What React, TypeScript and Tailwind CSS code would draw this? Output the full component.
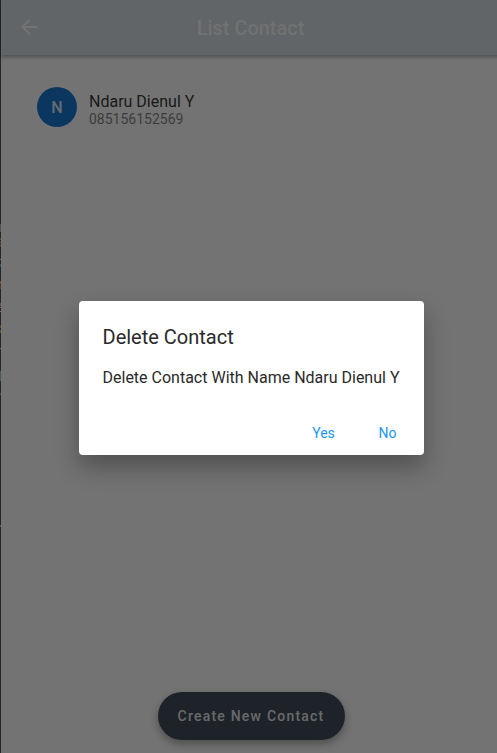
const edgeMarks = [
  { top: 224, height: 8, color: "#4b5250" },
  { top: 238, height: 2, color: "#5c4632" },
  { top: 241, height: 3, color: "#5a3a2c" },
  { top: 245, height: 1, color: "#666666" },
  { top: 259, height: 1, color: "#707070" },
  { top: 264, height: 3, color: "#26506e" },
  { top: 281, height: 3, color: "#6b5333" },
  { top: 285, height: 4, color: "#5a3a2c" },
  { top: 303, height: 3, color: "#6b5333" },
  { top: 307, height: 1, color: "#666666" },
  { top: 311, height: 1, color: "#707070" },
  { top: 325, height: 3, color: "#5a4630" },
  { top: 330, height: 3, color: "#6b4526" },
  { top: 348, height: 1, color: "#707070" },
  { top: 371, height: 10, color: "#4a5a56" },
  { top: 393, height: 2, color: "#5a4638" },
  { top: 525, height: 2, color: "#55555c" },
];

function WindowEdge() {
  return (
    <div className="relative w-px shrink-0 bg-[#272727]">
      {edgeMarks.map((m) => (
        <span
          key={m.top}
          className="absolute left-0 w-px"
          style={{ top: m.top, height: m.height, backgroundColor: m.color }}
        />
      ))}
    </div>
  );
}

function AppBar() {
  return (
    <header className="z-10 grid h-[55px] shrink-0 grid-cols-[56px_1fr_56px] items-center bg-[#d3dce1] text-[#fafafa] shadow-[0_2px_4px_rgba(0,0,0,0.3)]">
      <button aria-label="Back" className="flex justify-center pb-px">
        <svg className="size-6" viewBox="0 0 24 24" fill="currentColor">
          <path d="M20 11H7.83l5.59-5.59L12 4l-8 8 8 8 1.41-1.41L7.83 13H20v-2z" />
        </svg>
      </button>
      <h1 className="pr-px text-center text-[20px] leading-6 font-medium tracking-[-0.03px] text-[#fafafa]/90">
        List Contact
      </h1>
    </header>
  );
}

function ContactRow() {
  return (
    <div className="flex items-center gap-3 pt-8 pl-9">
      <div className="flex size-10 items-center justify-center rounded-full bg-[#1976d2] pt-px text-base font-medium text-[#fafafa]/90">
        N
      </div>
      <div className="pt-1">
        <p className="text-base leading-[19px] text-black/80">Ndaru Dienul Y</p>
        <p className="text-sm leading-4 text-black/50">085156152569</p>
      </div>
    </div>
  );
}

function DeleteDialog() {
  return (
    <div
      role="dialog"
      className="flex h-[154px] w-[345px] flex-col rounded-[4px] bg-white px-6 pt-6 text-[#2a2a2a] shadow-[0_12px_24px_rgba(0,0,0,0.3)]"
    >
      <h2 className="text-[20px] leading-6">Delete Contact</h2>
      <p className="mt-5 text-base leading-[18px] whitespace-nowrap">
        Delete Contact With Name Ndaru Dienul Y
      </p>
      <div className="mt-[28px] -mr-4 flex h-9 justify-end gap-2 text-sm text-[#2196f3]">
        <button className="w-[56px]">Yes</button>
        <button className="w-[56px]">No</button>
      </div>
    </div>
  );
}

export default function App() {
  return (
    <div className="flex h-[753px] w-[497px] overflow-hidden font-['Roboto','Noto_Sans',sans-serif]">
      <WindowEdge />
      <main className="relative flex w-[500px] shrink-0 flex-col bg-[#fafafa]">
        <AppBar />
        <ContactRow />
        <div className="mt-auto mb-[13px] flex justify-center">
          <button className="h-12 w-[187px] rounded-full bg-[#414c59] text-sm font-medium tracking-[1.22px] text-[#fafafa]/90 shadow-[0_4px_8px_rgba(0,0,0,0.32)]">
            Create New Contact
          </button>
        </div>
        <div className="absolute inset-0 z-20 flex items-center justify-center bg-black/54 pt-[2px]">
          <DeleteDialog />
        </div>
      </main>
    </div>
  );
}
